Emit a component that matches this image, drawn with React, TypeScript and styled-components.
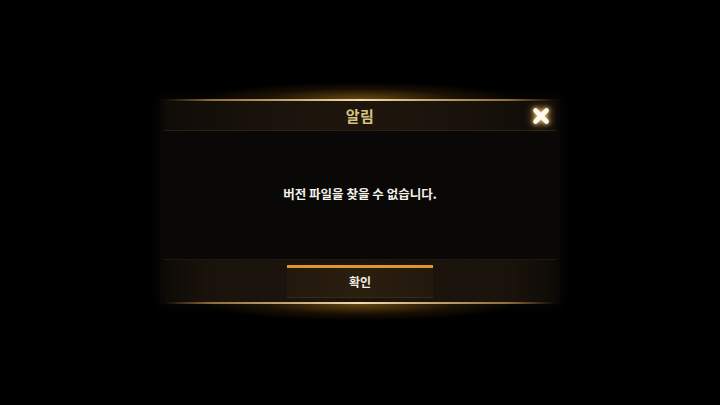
import React from 'react';
import styled, { createGlobalStyle } from 'styled-components';

const GlobalStyle = createGlobalStyle`
    html, body {
        margin: 0;
        padding: 0;
        background: #000;
    }
    body {
        font-family: "Noto Sans CJK KR", "Noto Sans", sans-serif;
    }
`;

const Screen = styled.div`
    width: 720px;
    height: 405px;
    background: #000;
    display: flex;
    align-items: center;
    justify-content: center;
    overflow: hidden;
`;

const Panel = styled.div`
    position: relative;
    width: 400px;
    margin-top: -2px;
    display: flex;
    flex-direction: column;
    background: #0a0806;
    box-shadow: 0 0 10px 2px rgba(14, 10, 5, 0.8);
`;

const GoldLine = styled.div<{ $glow: 'up' | 'down' }>`
    position: relative;
    height: 2px;
    margin: 0 4px;
    background: linear-gradient(90deg,
        rgba(120, 80, 30, 0) 0%,
        rgba(200, 150, 80, 0.7) 12%,
        #f3dcaa 50%,
        rgba(200, 150, 80, 0.7) 88%,
        rgba(120, 80, 30, 0) 100%);

    &::before {
        content: '';
        position: absolute;
        left: 12%;
        right: 12%;
        height: 16px;
        ${p => (p.$glow === 'up' ? 'bottom: 2px;' : 'top: 2px;')}
        background: radial-gradient(ellipse at ${p => (p.$glow === 'up' ? '50% 100%' : '50% 0%')},
            rgba(215, 150, 40, 0.45) 0%,
            rgba(160, 100, 20, 0.15) 45%,
            rgba(0, 0, 0, 0) 75%);
        pointer-events: none;
    }
`;

const Header = styled.div`
    position: relative;
    height: 29px;
    margin: 0 4px;
    display: flex;
    align-items: center;
    justify-content: center;
    background: linear-gradient(90deg, #0f0b07 0%, #1b140c 30%, #1e160d 50%, #1b140c 70%, #0f0b07 100%);
    border-bottom: 1px solid #2a2217;
`;

const Title = styled.span`
    color: #d8c37e;
    font-size: 15px;
    font-weight: bold;
    letter-spacing: 0.5px;
    margin-top: -1px;
`;

const CloseButton = styled.div`
    position: absolute;
    right: 4px;
    top: 50%;
    transform: translateY(-50%);
    width: 22px;
    height: 22px;
    display: flex;
    align-items: center;
    justify-content: center;
    cursor: pointer;
    filter: drop-shadow(0 0 2px rgba(255, 220, 140, 1)) drop-shadow(0 0 4px rgba(255, 190, 90, 0.7));
`;

const Body = styled.div`
    height: 128px;
    box-sizing: border-box;
    padding-bottom: 4px;
    display: flex;
    align-items: center;
    justify-content: center;
`;

const Message = styled.p`
    margin: 0;
    color: #f4f1ea;
    font-size: 12.5px;
    font-weight: bold;
`;

const Footer = styled.div`
    height: 42px;
    margin: 0 4px;
    display: flex;
    align-items: center;
    justify-content: center;
    background: linear-gradient(90deg, #0d0a06 0%, #1a130b 12%, #1c150d 50%, #1a130b 88%, #0d0a06 100%);
    border-top: 1px solid #201910;
`;

const ConfirmButton = styled.div`
    width: 146px;
    height: 29px;
    display: flex;
    align-items: center;
    justify-content: center;
    background: linear-gradient(90deg, #22180c 0%, #2a1e0f 50%, #22180c 100%);
    border-top: 3px solid #e0962f;
    border-bottom: 1px solid #3a2a14;
    cursor: pointer;
`;

const ButtonTitle = styled.span`
    color: #f1ede4;
    font-size: 12px;
    font-weight: bold;
    margin-top: -2px;
`;

const CloseIcon = () => (
    <svg width="18" height="18" viewBox="0 0 18 18">
        <path d="M3.5 3.5 L14.5 14.5 M14.5 3.5 L3.5 14.5" stroke="#fffaf0" strokeWidth="4.6" strokeLinecap="round" />
    </svg>
);

const App = () => {
    return (
        <Screen>
            <GlobalStyle />
            <Panel>
                <GoldLine $glow="up" />
                <Header>
                    <Title>알림</Title>
                    <CloseButton>
                        <CloseIcon />
                    </CloseButton>
                </Header>
                <Body>
                    <Message>버전 파일을 찾을 수 없습니다.</Message>
                </Body>
                <Footer>
                    <ConfirmButton>
                        <ButtonTitle>확인</ButtonTitle>
                    </ConfirmButton>
                </Footer>
                <GoldLine $glow="down" />
            </Panel>
        </Screen>
    );
};

export default App;
